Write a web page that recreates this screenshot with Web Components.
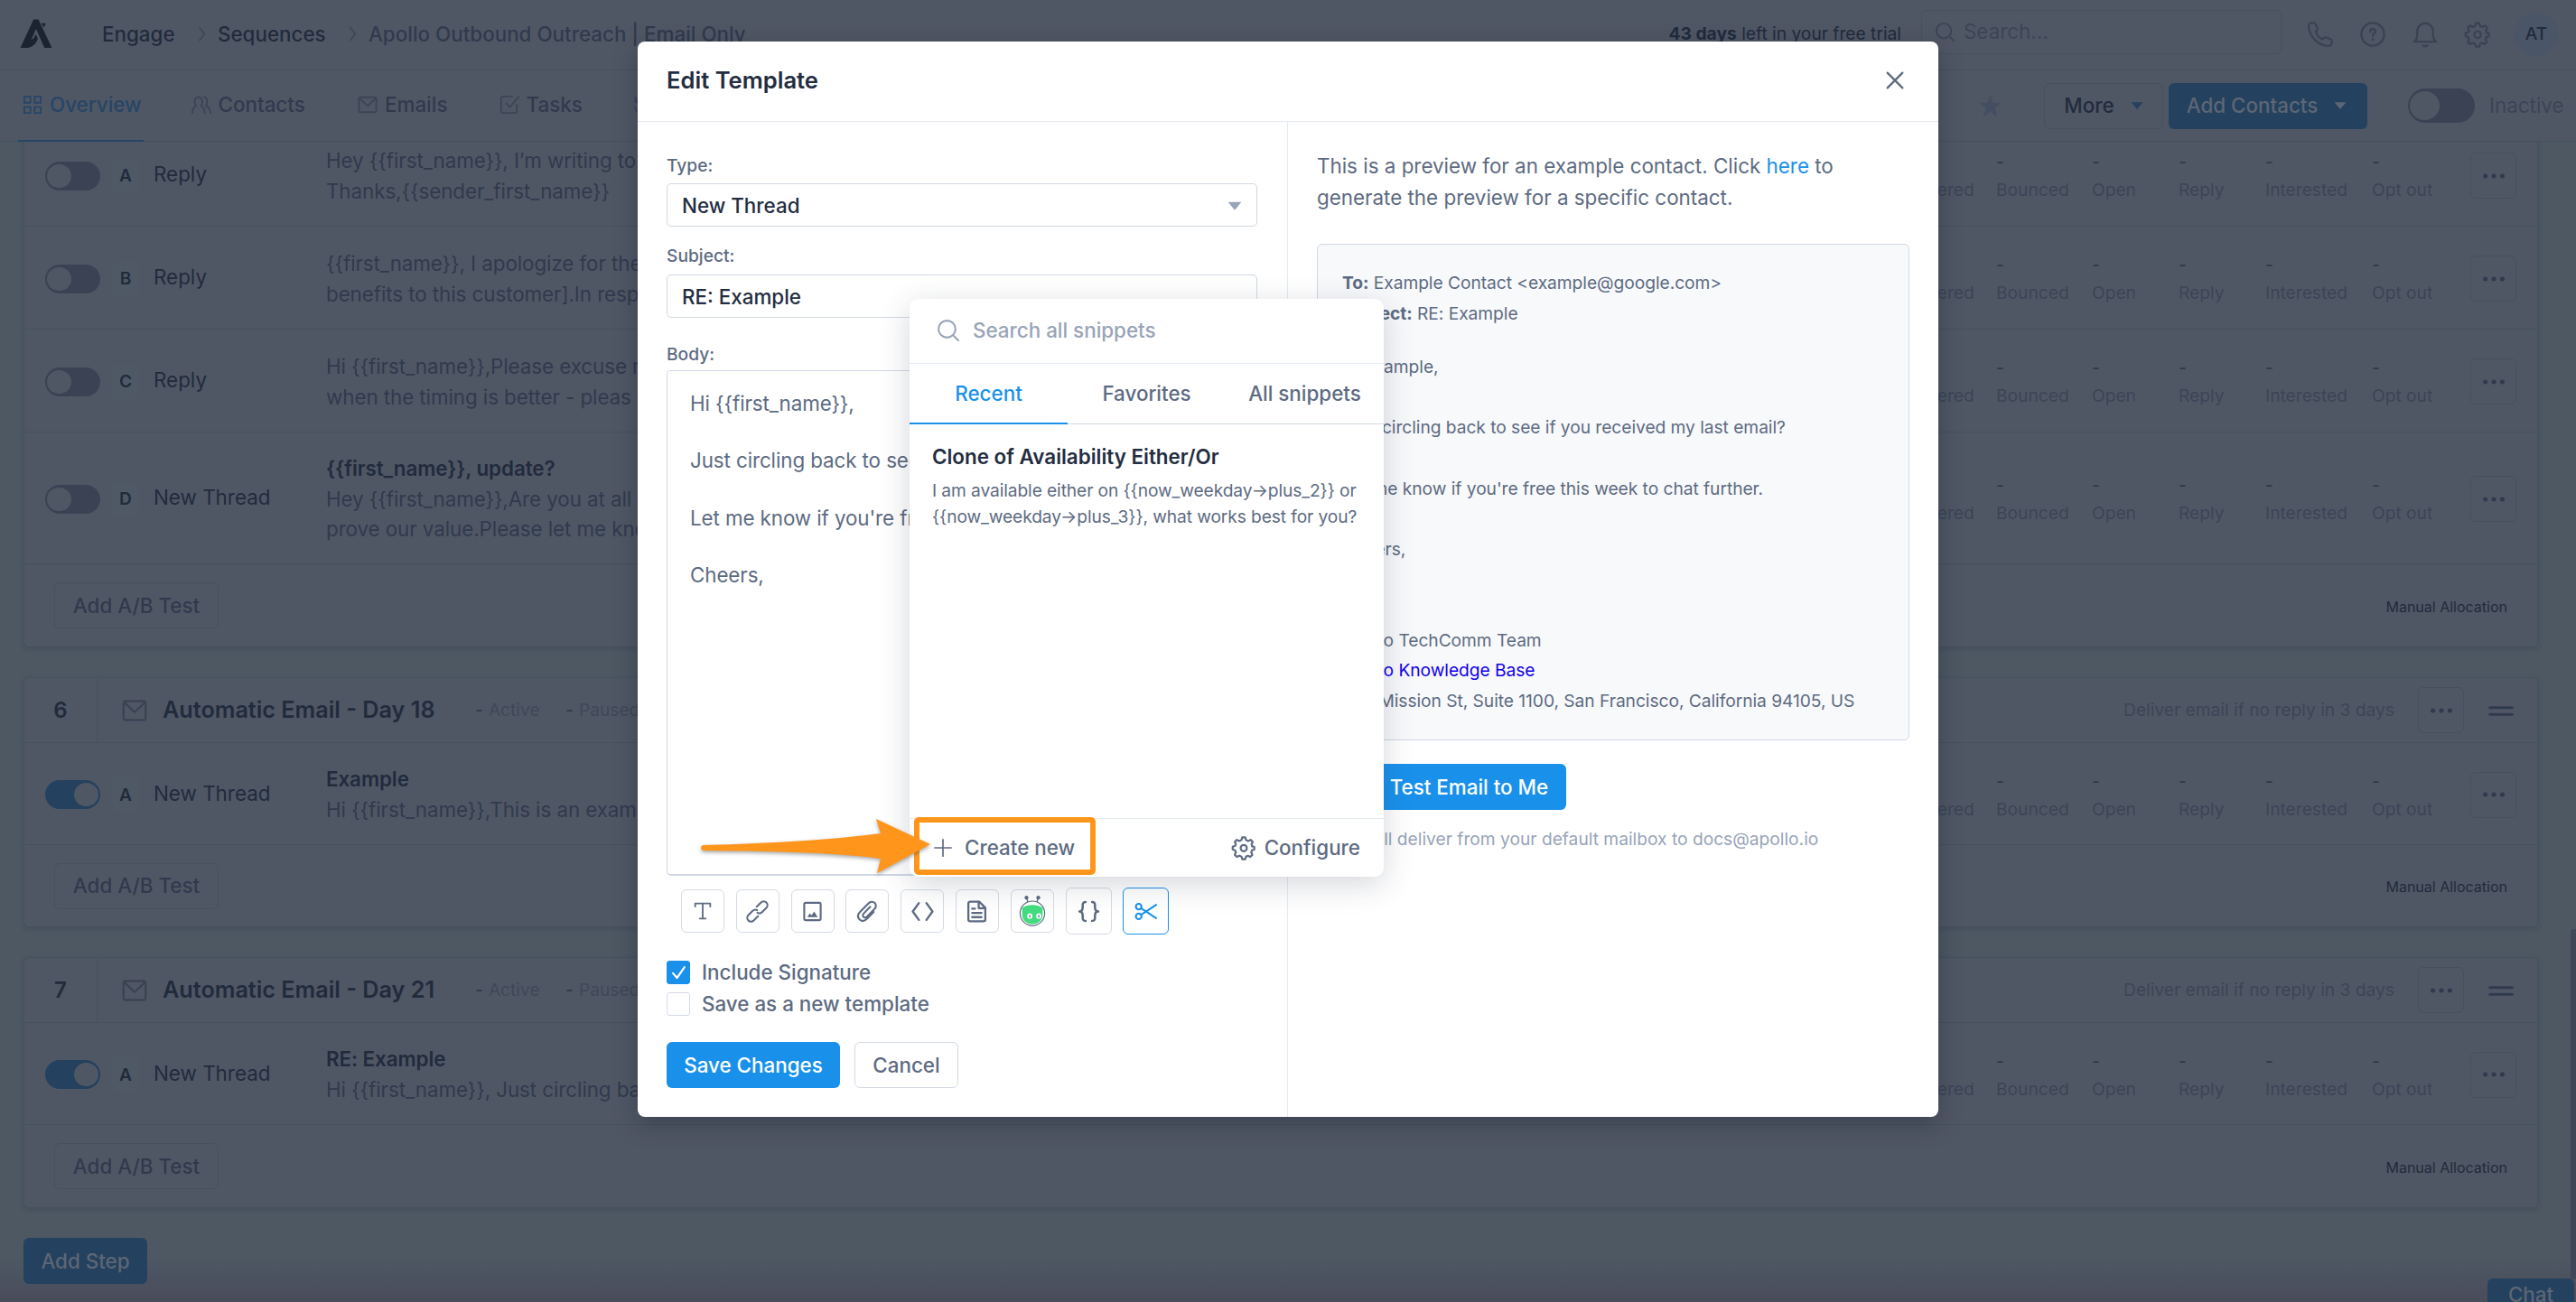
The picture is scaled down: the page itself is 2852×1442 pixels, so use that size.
<!DOCTYPE html>
<html lang="en">
<head>
<meta charset="utf-8">
<title>Edit Template</title>
<style>
  html, body { margin: 0; height: 100%; }
  body {
    width: 2852px;
    height: 1442px;
    overflow: hidden;
    position: relative;
    font-family: Inter, "Liberation Sans", sans-serif;
    font-size: 22.4px;
    line-height: 1.5;
    --ink: #212b3d;
    --text: #303a4e;
    --muted: #3b4557;
    --line: #45515d;
    --surface: #505764;
    --canvas: #4d5863;
    --blue: #24415f;
    --toggle: #3b4254;
    background: var(--canvas);
  }
</style>
</head>
<body>
<app-header></app-header>
<sequence-bar></sequence-bar>
<step-list>
  <step-card cut>
    <step-row letter="A" kind="Reply">
      <span>Hey {{first_name}}, I’m writing to</span><span>Thanks,{{sender_first_name}}</span>
    </step-row>
    <step-row letter="B" kind="Reply">
      <span>{{first_name}}, I apologize for the</span><span>benefits to this customer].In resp</span>
    </step-row>
    <step-row letter="C" kind="Reply">
      <span>Hi {{first_name}},Please excuse m</span><span>when the timing is better - pleas</span>
    </step-row>
    <step-row letter="D" kind="New Thread" subject="{{first_name}}, update?" style="--h:146px">
      <span>Hey {{first_name}},Are you at all i</span><span>prove our value.Please let me kno</span>
    </step-row>
  </step-card>
  <step-card number="6" heading="Automatic Email - Day 18" style="--foot:90px">
    <step-row letter="A" kind="New Thread" subject="Example" on style="--h:113px">
      <span>Hi {{first_name}},This is an examp</span>
    </step-row>
  </step-card>
  <step-card number="7" heading="Automatic Email - Day 21">
    <step-row letter="A" kind="New Thread" subject="RE: Example" on style="--h:113px">
      <span>Hi {{first_name}}, Just circling ba</span>
    </step-row>
  </step-card>
</step-list>
<chat-tab>Chat</chat-tab>
<edit-dialog heading="Edit Template">
  <template-form slot="form"></template-form>
  <email-preview slot="preview"></email-preview>
  <snippet-menu slot="over"></snippet-menu>
  <callout-arrow slot="over"></callout-arrow>
</edit-dialog>

<script>
const ICONS = {
  logo: '<path d="M10.2 1.5h3.4L23 21.500h-5.200L12 8.200 8.600 15.800c1.600-.8 2.600-2.400 3.200-4l1.400 3.200c-1.400 4.500-4.800 6.500-8.600 6.500H1z" fill="currentColor" stroke="none"/><path d="M15.600 4.200h3.200l-1.400 3z" fill="currentColor" stroke="none"/>',
  chevron: '<path d="M8 3l7 9-7 9"/>',
  grid: '<path d="M2 2h7.5v7.5H2zM14.5 2H22v7.5h-7.5zM2 14.5h7.5V22H2zM14.5 14.5H22V22h-7.5z"/>',
  people: '<path d="M1 22c0-5 1.5-7 4.5-8.5C3 11 3 3 8.500 2.500 14 3 14 11 11.500 13.500 14.500 15 16 17 16 22M15 2.500c4.500.5 5 8 2.500 11C20.500 15 23 17 23 22"/>',
  mail: '<rect x="1.500" y="3" width="21" height="18" rx="2"/><path d="M3 5l9 8.500L21 5"/>',
  task: '<path d="M15 2H4a2 2 0 0 0-2 2v16a2 2 0 0 0 2 2h15a2 2 0 0 0 2-2v-8M8 10l4.500 5L23 2.500"/>',
  history: '<path d="M3 3v6h6M3.500 9a10 10 0 1 1-1 6"/>',
  search: '<circle cx="11" cy="11" r="9"/><path d="M17.500 17.500L23 23"/>',
  phone: '<path d="M5.500 1h-2C1.500 1 .8 3 1 5.500 2 14 9 22 18.500 23c2.500 0 4.500-.8 4.500-3v-1.500c0-1-.5-1.500-1.500-2l-4-1.500c-1-.3-2 0-2.500.8l-.8 1C11 15.500 8.500 12.500 7.500 9.500l1-.8c.8-.6 1-1.500.7-2.500L7.500 2.500C7.200 1.500 6.500 1 5.500 1z"/>',
  help: '<circle cx="12" cy="12" r="10.800"/><path d="M9.500 9.500c0-3.500 5-3.500 5-.3 0 2-2.500 2-2.500 4.300M12 16.500v.8"/>',
  bell: '<path d="M1.500 19c3-2 3-4 3-9.500 0-5 3.500-8 7.500-8s7.500 3 7.500 8c0 5.500 0 7.500 3 9.500zM10 22.500c1 1.200 3 1.200 4 0"/>',
  gear: '<path d="M9.700 4l.8-2.700h3L14.300 4l2.200 1 2.600-1.200 2.100 2.100-1.200 2.600.6 2 2.200.6v2.600l-2.400.9-.8 2.100 1.200 2.500-2.100 2.100-2.500-1.200-1.900.9-.8 2.700h-3L9.700 21l-2.200-.9L4.900 21.300l-2.100-2.100L4 16.600l-.8-2-2.500-.9v-2.900l2.500-.8.8-2L2.800 5.900l2.100-2.100L7.500 5z"/><circle cx="12" cy="12.300" r="3.200"/>',
  star: '<path d="M12 0l3 8.500h9l-7 5.500 2.500 9.500L12 18l-7.500 5.500L7 14 0 8.500h9z" fill="currentColor" stroke="none"/>',
  tri: '<path d="M1 5.500h22L12 19z" fill="currentColor" stroke="none"/>',
  close: '<path d="M2 2l20 20M22 2L2 22"/>',
  dots: '<g fill="currentColor" stroke="none"><circle cx="2.600" cy="12" r="2.500"/><circle cx="12" cy="12" r="2.500"/><circle cx="21.400" cy="12" r="2.500"/></g>',
  handle: '<path d="M1.500 9.200h21M1.500 15.600h21"/>',
  plus: '<path d="M12 1v22M1 12h22"/>',
  check: '<path d="M4 12.500l5.500 6.500L20 4"/>',
  type: '<path d="M2 6V2h20v4M12 2v20M8 22h8"/>',
  link: '<g transform="rotate(-45 12 12)"><path d="M9 16H2.500a4 4 0 0 1 0-8H9a4 4 0 0 1 3.800 3M15 8h6.500a4 4 0 0 1 0 8H15a4 4 0 0 1-3.800-3"/></g>',
  image: '<rect x="2.500" y="2" width="19" height="20" rx="1.500"/><path d="M6 18.500l3-4.500 2 2.500 3-4.500 4 6.500z" fill="currentColor" stroke="none"/>',
  clip: '<path d="M18.500 12.500l-6.800 7c-3 3-6 3.200-8.200 1-2.200-2.300-2-5.500.7-8.300L12.800 3.500c2.200-2.200 5-2.300 6.800-.6 1.800 1.800 1.700 4.600-.5 6.800l-7.400 7.500c-1.400 1.400-3 1.500-4 .5s-.9-2.500.5-3.900l6.600-6.800"/>',
  code: '<path d="M8 3L1.500 12 8 21M16 3l6.500 9L16 21"/>',
  doc: '<path d="M14.500 1.500H5a2 2 0 0 0-2 2v17a2 2 0 0 0 2 2h14a2 2 0 0 0 2-2V8zM14 2v6.500h6.500M7 9h3M7 13.500h10M7 18h10"/>',
  braces: '<path d="M8.500 2C5 2 5.500 4.500 5.500 7.500S4 12 2 12c2 0 3.500 1.500 3.500 4.500S5 22 8.500 22M15.500 2c3.500 0 3 2.500 3 5.500S20 12 22 12c-2 0-3.500 1.500-3.500 4.500s.5 5.500-3 5.500"/>',
  scissors: '<circle cx="4.500" cy="6.800" r="3"/><circle cx="4.500" cy="17.200" r="3"/><path d="M7 8.500L23 19M7 15.500L23 5"/>',
  robot: '<path d="M7.500 1.500l1.500 6M16.500 1.500L15 7.500" stroke-width="1"/><circle cx="7.400" cy="1.500" r="1.500" fill="currentColor" stroke="none"/><circle cx="16.600" cy="1.500" r="1.500" fill="currentColor" stroke="none"/><circle cx="12" cy="13.800" r="9.600" fill="#fff" stroke-width=".8"/><path d="M4 9.500c5-3 11-3 16 0v6c-.5 4.500-4 6.700-8 6.700s-7.500-2.200-8-6.700z" fill="#43dc80" stroke="none"/><g fill="#fff" stroke="none"><ellipse cx="10" cy="16" rx="2" ry="2.200"/><ellipse cx="17" cy="16" rx="2" ry="2.200"/></g><path d="M10 15.200v1.600M17 15.200v1.600" stroke-width=".9"/>'
};

const define = (name, css, html) => customElements.define(name, class extends HTMLElement {
  connectedCallback() {
    if (this.shadowRoot) return;
    const root = this.attachShadow({mode: 'open'});
    const body = typeof html === 'function' ? html(this) : html;
    root.innerHTML = `<style>* { box-sizing: border-box; } ${css}</style>${body}`;
  }
});

define('app-icon', `
  :host { display: inline-block; flex: none; width: var(--size, 24px); height: var(--size, 24px); }
  svg { display: block; width: 100%; height: 100%; overflow: visible; }
`, el => `<svg viewBox="0 0 24 24" fill="none" stroke="currentColor" stroke-width="${el.getAttribute('weight') || 2}"
  stroke-linecap="round" stroke-linejoin="round">${ICONS[el.getAttribute('name')]}</svg>`);

define('toggle-switch', `
  :host { display: flex; flex: none; width: 61px; height: 32px; padding: 3px 2px; border-radius: 16px; background: var(--toggle); box-sizing: border-box; }
  :host([on]) { justify-content: flex-end; background: var(--blue); }
  :host([large]) { width: 74px; height: 38px; border-radius: 19px; }
  i { height: 100%; aspect-ratio: 1.03; border-radius: 50%; background: var(--surface); }
`, '<i></i>');

define('app-button', `
  :host {
    display: flex; align-items: center; justify-content: center; flex: none; box-sizing: border-box;
    height: 51px; border: 1.500px solid var(--btn-line, var(--line)); border-radius: 6px;
    font-weight: 500; white-space: nowrap; color: var(--btn-text, var(--text));
  }
  :host([primary]) { background: var(--btn-fill, var(--blue)); border-width: 0; }
  :host([square]) { width: 51px; }
`, '<slot></slot>');

define('app-header', `
  :host { display: flex; align-items: center; height: 78px; box-sizing: border-box; border-bottom: 1px solid var(--line); background: var(--surface); color: var(--ink); font-weight: 500; padding: 0 20px 2px 21px; }
  .logo { --size: 38px; color: #1b2331; margin-right: 54px; }
  .crumb { white-space: nowrap; }
  .chev { --size: 19px; color: var(--muted); width: 49px; padding-left: 15px; box-sizing: border-box; }
  .trial { margin-left: auto; font-size: 19.200px; font-weight: 400; }
  .trial b { font-weight: 700; }
  .search { display: flex; align-items: center; gap: 10px; width: 399px; height: 49px; margin-left: 22px; margin-top: -5px; padding-left: 14px; box-sizing: border-box; border: 1.500px solid var(--line); border-radius: 5px; color: var(--muted); font-weight: 400; }
  .tools { display: flex; align-items: center; gap: 30px; margin-left: 29px; color: var(--toggle); --size: 28px; }
  .avatar { width: 48px; height: 48px; margin-left: 27px; border-radius: 50%; background: #4a5568; display: grid; place-items: center; font-size: 19.200px; color: var(--ink); }
`, `
  <app-icon class="logo" name="logo"></app-icon>
  <span class="crumb" style="width:79px">Engage</span>
  <app-icon class="chev" name="chevron"></app-icon>
  <span class="crumb" style="width:118px">Sequences</span>
  <app-icon class="chev" name="chevron"></app-icon>
  <span class="crumb" style="color:var(--text)">Apollo Outbound Outreach | Email Only</span>
  <span class="trial"><b>43 days</b> left in your free trial</span>
  <div class="search"><app-icon name="search" style="--size:22px"></app-icon>Search...</div>
  <div class="tools">
    <app-icon name="phone"></app-icon><app-icon name="help"></app-icon><app-icon name="bell"></app-icon><app-icon name="gear"></app-icon>
  </div>
  <div class="avatar">AT</div>
`);

define('sequence-bar', `
  :host { display: flex; align-items: center; height: 79px; box-sizing: border-box; border-bottom: 1px solid var(--line); background: var(--surface); padding: 0 20px; position: relative; z-index: 1; }
  .tabs { display: flex; gap: 47.500px; align-self: stretch; margin-right: auto; }
  .tab { display: flex; align-items: center; gap: 8px; padding: 0 5px 3px; color: var(--text); font-weight: 500; box-sizing: border-box; height: 79px; white-space: nowrap; --size: 22px; }
  .tab app-icon { color: var(--muted); }
  .tab.on, .tab.on app-icon { color: #264568; }
  .tab.on { border-bottom: 2px solid #264568; padding-bottom: 1px; }
  .star { --size: 25px; color: #434f60; margin-right: 47px; }
  app-icon[name=tri] { --size: 14px; }
`, `
  <div class="tabs">
    <div class="tab on" style="width:139px"><app-icon name="grid"></app-icon>Overview</div>
    <div class="tab" style="width:137px"><app-icon name="people"></app-icon>Contacts</div>
    <div class="tab" style="width:109px"><app-icon name="mail"></app-icon>Emails</div>
    <div class="tab" style="width:101px"><app-icon name="task"></app-icon>Tasks</div>
    <div class="tab"><app-icon name="history"></app-icon></div>
  </div>
  <app-icon class="star" name="star"></app-icon>
  <app-button style="width:132px;gap:18px;color:var(--ink)">More<app-icon name="tri" style="color:var(--blue)"></app-icon></app-button>
  <app-button primary style="width:220px;gap:18px;margin-left:6px;padding-right:3px;color:#5d6674">Add Contacts<app-icon name="tri"></app-icon></app-button>
  <toggle-switch large style="margin-left:45px"></toggle-switch>
  <span style="width:76px;margin-left:16px;color:var(--muted)">Inactive</span>
`);

define('step-list', `
  :host { display: flex; flex-direction: column; gap: 33px; height: 1285px; overflow: hidden; padding: 0 42px 0 26px; box-sizing: border-box;
    background: linear-gradient(to bottom, transparent 1235px, rgba(70, 66, 84, .55) 1285px); }
  .add { width: 137px; color: #5d6674; align-self: flex-start; }
`, `<slot></slot><app-button primary class="add">Add Step</app-button>`);

define('step-card', `
  :host { display: block; flex: none; box-sizing: border-box; border: 1.500px solid var(--line); border-radius: 6px; background: var(--surface); box-shadow: 0 2px 5px rgba(40, 50, 65, .25); }
  :host([cut]) { margin-top: -21px; }
  .head { display: flex; align-items: center; height: 72px; border-bottom: 1px solid var(--line); padding-right: 26px; color: var(--ink); }
  .num { width: 81px; height: 70px; display: grid; place-items: center; border-right: 1px solid var(--line); font-weight: 600; font-size: 24px; }
  .head > app-icon { --size: 28px; color: var(--toggle); margin: 0 17px 0 27px; }
  h3 { margin: 0; width: 346px; font-weight: 600; font-size: 25.200px; white-space: nowrap; }
  .stat { font-size: 19.200px; color: #3f4859; white-space: nowrap; width: 100px; }
  .stat b { color: var(--text); font-weight: 500; margin-right: 6px; }
  .rule { margin-left: auto; margin-right: 26px; font-size: 19.200px; color: var(--muted); }
  .foot { display: flex; align-items: center; justify-content: space-between; height: var(--foot, 91px); padding: 0 33px; }
  .foot app-button { width: 182px; }
  .foot span { font-size: 16px; color: var(--ink); padding-top: 2px; }
`, el => `
  ${el.hasAttribute('number') ? `<div class="head">
    <div class="num">${el.getAttribute('number')}</div>
    <app-icon name="mail"></app-icon>
    <h3>${el.getAttribute('heading')}</h3>
    <span class="stat"><b>-</b>Active</span><span class="stat"><b>-</b>Paused</span>
    <span class="rule">Deliver email if no reply in 3 days</span>
    <app-button square><app-icon name="dots"></app-icon></app-button>
    <app-icon name="handle" weight="2.600" style="margin:0 0 0 27px;color:var(--text)"></app-icon>
  </div>` : ''}
  <slot></slot>
  <div class="foot"><app-button>Add A/B Test</app-button><span>Manual Allocation</span></div>
`);

define('step-row', `
  :host { display: flex; align-items: center; height: var(--h, 114px); box-sizing: border-box; border-bottom: 1.500px solid var(--line); padding: 2px 23px 0 23px; }
  .letter { width: 30px; height: 38px; margin: 0 16px 0 13px; border-radius: 4px; background: #4f5965; display: grid; place-items: center; font-size: 19.200px; font-weight: 600; color: var(--ink); }
  .kind { width: 191px; color: var(--ink); padding-bottom: 3px; }
  .copy { display: flex; flex-direction: column; color: var(--text); white-space: nowrap; letter-spacing: -.08px; }
  .copy b { font-weight: 600; color: var(--ink); }
  .stats { display: grid; grid-template-columns: 110px 106px 96px 96px 118px 109px; margin-left: auto; padding-top: 1px; font-size: 19.200px; line-height: 30.700px; color: var(--muted); }
  .stats b { display: block; font-weight: 500; color: var(--text); }
`, el => `
  <toggle-switch ${el.hasAttribute('on') ? 'on' : ''}></toggle-switch>
  <div class="letter">${el.getAttribute('letter')}</div>
  <div class="kind">${el.getAttribute('kind')}</div>
  <div class="copy">${el.hasAttribute('subject') ? `<b>${el.getAttribute('subject')}</b>` : ''}<slot></slot></div>
  <div class="stats">${['Delivered', 'Bounced', 'Open', 'Reply', 'Interested', 'Opt out'].map(s => `<span><b>-</b>${s}</span>`).join('')}</div>
  <app-button square><app-icon name="dots"></app-icon></app-button>
`);

// chat launcher and scrollbar thumb, both floating over the step list
define('chat-tab', `
  .tab { position: absolute; left: 2754px; top: 1416px; width: 96px; height: 44px; border-radius: 6px 6px 0 0; background: var(--blue); color: #5d6674; text-align: center; line-height: 36px; font-weight: 500; }
  .thumb { position: absolute; left: 2846px; top: 1029px; width: 10px; height: 387px; border-radius: 4px 0 0 0; background: #404759; }
`, '<div class="thumb"></div><div class="tab"><slot></slot></div>');

define('edit-dialog', `
  :host { position: absolute; left: 706px; top: 46px; width: 1440px; height: 1191px; z-index: 2; display: flex; flex-direction: column; border-radius: 8px; background: #fff; box-shadow: 0 8px 26px rgba(20, 28, 45, .35); color: #5d6b82;
    --btn-line: #d3d9e5; --btn-text: #5d6b82; --btn-fill: #1991eb; }
  header { display: flex; align-items: center; justify-content: space-between; height: 89px; padding: 0 38px 2px 32px; border-bottom: 1.500px solid #e5ebf3; color: #232d41; font-size: 25.600px; font-weight: 600; }
  main { display: grid; grid-template-columns: 720px 1fr; flex: 1; }
`, el => `
  <header>${el.getAttribute('heading')}<app-icon name="close" weight="2.800" style="--size:20px;color:#5d6b82"></app-icon></header>
  <main><slot name="form"></slot><slot name="preview"></slot></main>
  <slot name="over"></slot>
`);

define('template-form', `
  :host { display: flex; flex-direction: column; padding: 36px 33px 0 32px; border-right: 1.500px solid #e5ebf3; box-sizing: border-box; }
  label { height: 24px; line-height: 24px; font-size: 19.200px; font-weight: 500; margin-bottom: 8px; }
  .field { display: flex; align-items: center; justify-content: space-between; height: 48px; flex: none; padding: 1px 16px 0 16px; border: 1.500px solid #d0d8e5; border-radius: 5px; color: #232d41; font-weight: 500; margin-bottom: 20px; }
  .editor { height: 560px; flex: none; border: 1.500px solid #d0d8e5; border-bottom-width: 2px; border-radius: 5px; padding: 19px 25px; letter-spacing: -.1px; }
  .editor p { margin: 0 0 29.800px; }
  .tools { display: flex; align-items: center; gap: 12.800px; height: 52px; margin: 13px 0 29px 16px; }
  .tools span { width: 48px; height: 48px; border: 1.500px solid #d5dae6; border-radius: 6px; display: grid; place-items: center; --size: 25px; }
  .tools .big { width: 51px; height: 52px; }
  .tools .on { color: #1991eb; border-color: #1991eb; }
  .check { display: flex; align-items: center; gap: 13px; height: 26px; margin-bottom: 9px; font-weight: 500; }
  .check i { width: 26px; height: 26px; border: 1.500px solid #d5dae6; border-radius: 3px; display: grid; place-items: center; color: #fff; --size: 19px; }
  .check .on { background: #1991eb; border-color: #1991eb; }
  .actions { display: flex; gap: 16px; margin-top: 20px; }
`, `
  <label>Type:</label>
  <div class="field">New Thread<app-icon name="tri" style="--size:16px;color:#98a4b8"></app-icon></div>
  <label style="margin-bottom:9px">Subject:</label>
  <div class="field" style="margin-bottom:28px">RE: Example</div>
  <label style="margin-bottom:6px">Body:</label>
  <div class="editor">
    <p>Hi {{first_name}},</p><p>Just circling back to see</p>
    <p>Let me know if you're fr</p><p>Cheers,</p>
  </div>
  <div class="tools">
    <span><app-icon name="type" style="--size:20px" weight="2.200"></app-icon></span>
    <span><app-icon name="link"></app-icon></span>
    <span><app-icon name="image" style="--size:23px" weight="2.200"></app-icon></span>
    <span><app-icon name="clip"></app-icon></span>
    <span><app-icon name="code" weight="2.200"></app-icon></span>
    <span><app-icon name="doc" weight="2.200"></app-icon></span>
    <span><app-icon name="robot" style="--size:34px"></app-icon></span>
    <span class="big"><app-icon name="braces" weight="2.400"></app-icon></span>
    <span class="big on"><app-icon name="scissors"></app-icon></span>
  </div>
  <div class="check"><i class="on"><app-icon name="check" weight="2.800"></app-icon></i>Include Signature</div>
  <div class="check"><i></i>Save as a new template</div>
  <div class="actions">
    <app-button primary style="width:192px;color:#fff">Save Changes</app-button>
    <app-button style="width:115px">Cancel</app-button>
  </div>
`);

define('email-preview', `
  :host { display: block; padding: 31px 32px 0; }
  p { margin: 0 0 34px; line-height: 35px; white-space: nowrap; }
  p a { color: #1991eb; }
  .mail { height: 550px; padding: 26px 27px; border: 1.500px solid #d0d8e5; border-radius: 6px; background: #f8f9fb; font-size: 19.200px; line-height: 33.600px; white-space: nowrap; letter-spacing: -.04px; }
  .mail div { min-height: 33.600px; }
  .mail a { color: #1200ee; }
  .note { margin-top: 18px; font-size: 19.200px; color: #98a4b8; }
`, `
  <p>This is a preview for an example contact. Click <a>here</a> to<br>generate the preview for a specific contact.</p>
  <div class="mail">
    <div><b>To:</b> Example Contact &lt;example@google.com&gt;</div>
    <div style="margin-bottom:26px"><b>Subject:</b> RE: Example</div>
    <div>Hi Example,</div><div></div>
    <div>Just circling back to see if you received my last email?</div><div></div>
    <div>Let me know if you're free this week to chat further.</div><div></div>
    <div>Cheers,</div><div></div><div></div>
    <div>Apollo TechComm Team</div>
    <div><a>Apollo Knowledge Base</a></div>
    <div>535 Mission St, Suite 1100, San Francisco, California 94105, US</div>
  </div>
  <app-button primary style="width:276px;margin-top:26px;color:#fff">Send Test Email to Me</app-button>
  <div class="note">Email will deliver from your default mailbox to docs@apollo.io</div>
`);

define('snippet-menu', `
  :host { position: absolute; left: 301px; top: 285px; width: 525px; height: 640px; display: flex; flex-direction: column; border-radius: 10px; background: #fff; box-shadow: 0 8px 34px rgba(40, 50, 70, .2); }
  .search { display: flex; align-items: center; gap: 15px; height: 72px; padding: 0 30px 2px; border-bottom: 1.500px solid #e5ebf3; color: #98a4b8; --size: 25px; font-weight: 500; }
  .tabs { display: grid; grid-template-columns: repeat(3, 1fr); height: 67px; font-weight: 500; text-align: center; line-height: 65px; border-bottom: 1.500px solid #d0d8e5; }
  .tabs .on { color: #1991eb; border-bottom: 2px solid #1991eb; height: 67px; }
  .list { flex: 1; padding: 19px 25px; font-size: 19.200px; line-height: 29px; white-space: nowrap; letter-spacing: -.1px; }
  .list b { display: block; font-size: 22.400px; line-height: 33px; color: #232d41; font-weight: 600; margin-bottom: 7px; letter-spacing: 0; }
  footer { display: flex; align-items: center; height: 65px; padding: 0 26px 1px 27px; border-top: 1.500px solid #e5ebf3; font-weight: 500; }
`, `
  <div class="search"><app-icon name="search"></app-icon>Search all snippets</div>
  <div class="tabs"><span class="on">Recent</span><span>Favorites</span><span>All snippets</span></div>
  <div class="list"><b>Clone of Availability Either/Or</b>I am available either on {{now_weekday→plus_2}} or<br>{{now_weekday→plus_3}}, what works best for you?</div>
  <footer><app-icon name="plus" style="--size:20px;margin-right:14px"></app-icon>Create new
    <app-icon name="gear" style="--size:26px;margin:0 10px 0 auto"></app-icon>Configure</footer>
`);

// orange highlight box and the arrow pointing at "Create new"
define('callout-arrow', `
  :host { position: absolute; left: 64px; top: 851px; width: 450px; height: 80px; }
  svg { display: block; overflow: visible; filter: drop-shadow(0 2px 2px rgba(60, 60, 60, .45)); }
  .box { position: absolute; left: 242px; top: 8px; width: 201px; height: 64px; border: 6px solid #ff961b; border-radius: 5px; }
`, `
  <div class="box"></div>
  <svg width="450" height="80" fill="#ff961b"><path d="M8 39Q130 36 205 26L200 10 260 38 201 70 205 54Q150 46 8 45Q4 42 8 39z"/></svg>
`);
</script>
</body>
</html>
